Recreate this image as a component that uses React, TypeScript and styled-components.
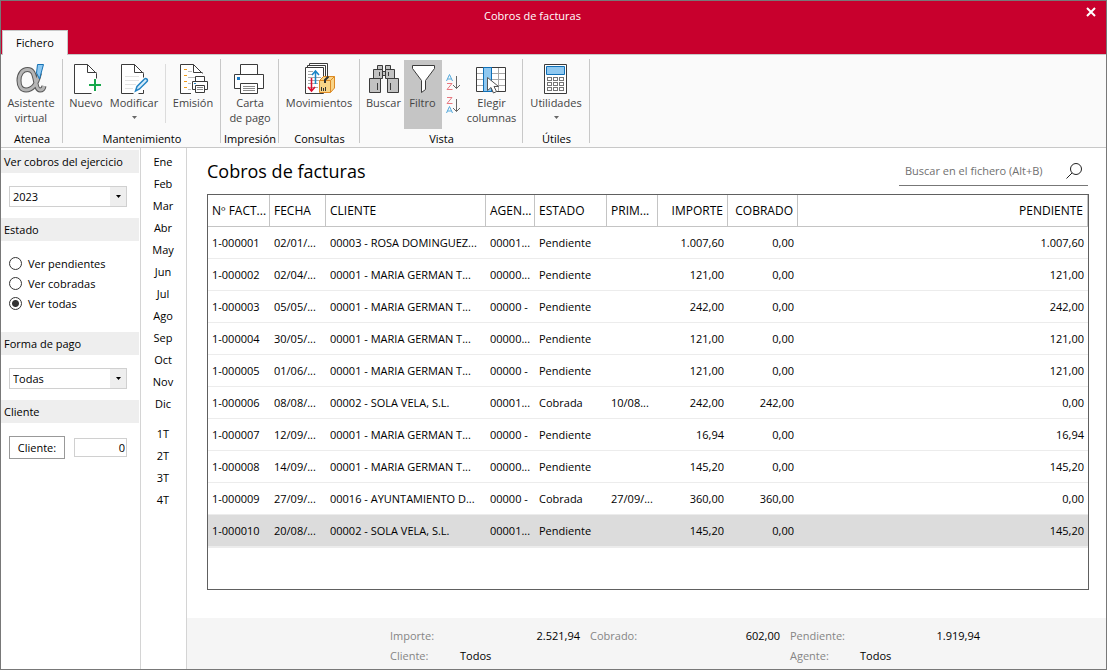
import React, { useState } from "react";
import styled, { createGlobalStyle } from "styled-components";

const GlobalStyle = createGlobalStyle`
  *, *::before, *::after { box-sizing: border-box; }
  body { margin: 0; }
  body, button, input, select {
    font-family: "Open Sans", "Segoe UI", sans-serif;
    font-size: 11px;
    line-height: 15px;
    color: #000;
  }
  button { padding: 0; border: 0; background: none; }
  h1, h2, p { margin: 0; font-weight: normal; }
`;

const Window = styled.div`
  display: flex;
  flex-direction: column;
  min-height: 100vh;
  border: 1px solid #787878;
  background: #fff;
`;

const TitleBar = styled.header`
  display: grid;
  grid-template-columns: 40px 1fr 82px;
  height: 29px;
  background: #c8002d;
  color: #fff;
`;

const WindowTitle = styled.p`
  grid-column: 2;
  align-self: center;
  text-align: center;
`;

const CloseButton = styled.button`
  justify-self: end;
  display: grid;
  place-items: center;
  width: 30px;
  height: 22px;
`;

const TabStrip = styled.nav`
  display: flex;
  padding-left: 1px;
  height: 24px;
  background: #c8002d;
`;

const Tab = styled.button`
  width: 66px;
  height: 25px;
  padding-bottom: 2px;
  border: 1px solid #c8c8c8;
  border-bottom: 0;
  background: #fafafa;
  position: relative;
`;

const Ribbon = styled.div`
  display: flex;
  height: 94px;
  border-top: 1px solid #c8c8c8;
  border-bottom: 1px solid #c8c8c8;
  background: #fafafa;
`;

const Group = styled.section<{ $width: number }>`
  display: flex;
  flex-direction: column;
  justify-content: space-between;
  width: ${(p) => p.$width}px;
  margin: 4px 0;
  border-right: 1px solid #c8c8c8;
`;

const GroupTools = styled.div<{ $start?: boolean }>`
  display: flex;
  justify-content: ${(p) => (p.$start ? "flex-start" : "center")};
  padding: 1px 0 0 1px;
`;

const GroupName = styled.h2`
  font-size: 11px;
  line-height: 9px;
  padding-left: 1px;
  text-align: center;
  white-space: nowrap;
`;

const Tool = styled.button<{ $width: number; $active?: boolean }>`
  display: flex;
  flex-direction: column;
  align-items: center;
  flex: none;
  width: ${(p) => p.$width}px;
  height: 69px;
  padding-top: 3px;
  color: #444;
  white-space: nowrap;
  background: ${(p) => (p.$active ? "#c5c5c5" : "transparent")};
  svg { flex: none; }
`;

const SortTools = styled.div`
  display: flex;
  flex-direction: column;
  gap: 6px;
  width: 22px;
  padding: 14px 0 0 3px;
`;

const SortButton = styled.button`
  width: 18px;
  height: 17px;
`;

const ToolDivider = styled.span`
  width: 1px;
  height: 59px;
  margin: 4px 5px 0;
  background: #dcdcdc;
`;

const Body = styled.div`
  display: flex;
  flex: 1;
`;

const Sidebar = styled.aside`
  width: 140px;
  padding: 2px 1px 0 0;
  border-right: 1px solid #d4d4d4;
`;

const SideTitle = styled.h2`
  height: 23px;
  padding: 4px 3px;
  background: #eee;
  font-size: 11px;
  white-space: nowrap;
`;

const SideBlock = styled.div`
  height: 45px;
  padding: 13px 0 0 8px;
`;

const SelectBox = styled.div`
  position: relative;
  width: 118px;
  svg { position: absolute; right: 6px; top: 9px; pointer-events: none; }
`;

const Select = styled.select`
  display: block;
  width: 100%;
  height: 21px;
  padding: 0 3px;
  border: 1px solid #d0d0d0;
  border-radius: 0;
  appearance: none;
  background: linear-gradient(to right, #fff calc(100% - 16px), #eee calc(100% - 16px));
`;

const Radios = styled.div`
  display: flex;
  flex-direction: column;
  height: 91px;
  padding: 12px 0 0 8px;
`;

const RadioLabel = styled.label`
  display: flex;
  align-items: center;
  gap: 6px;
  height: 20px;
`;

const Radio = styled.input`
  width: 13px;
  height: 13px;
  margin: 0;
  border: 1px solid #333;
  border-radius: 50%;
  appearance: none;
  background: ${(p) => (p.checked ? "radial-gradient(circle, #333 3px, #fff 4px)" : "#fff")};
`;

const ClientRow = styled.div`
  display: flex;
  align-items: center;
  gap: 9px;
  padding: 13px 0 0 8px;
`;

const ClientButton = styled.button`
  width: 56px;
  height: 23px;
  border: 1px solid #999;
  background: #fff;
`;

const ClientInput = styled.input`
  width: 53px;
  height: 19px;
  padding: 0 1px;
  border: 1px solid #d0d0d0;
  text-align: right;
`;

const Months = styled.nav`
  display: flex;
  flex-direction: column;
  width: 46px;
  padding: 2px 1px 0 0;
  border-right: 1px solid #d4d4d4;
`;

const MonthButton = styled.button<{ $spaced?: boolean }>`
  height: 22px;
  margin-top: ${(p) => (p.$spaced ? 8 : 0)}px;
`;

const Main = styled.main`
  display: flex;
  flex: 1;
  flex-direction: column;
  min-width: 0;
`;

const PageHead = styled.div`
  display: flex;
  justify-content: space-between;
  align-items: flex-end;
  height: 46px;
  padding: 0 18px 8px 20px;
`;

const PageTitle = styled.h1`
  font-size: 18px;
  line-height: 30px;
`;

const SearchBox = styled.div`
  display: flex;
  align-items: center;
  width: 189px;
  height: 30px;
  padding: 0 5px 0 6px;
  border-bottom: 1px solid #777;
`;

const SearchInput = styled.input`
  flex: 1;
  min-width: 0;
  padding: 0;
  border: 0;
  outline: 0;
  background: none;
  &::placeholder { color: #707070; opacity: 1; }
`;

const SearchButton = styled.button`
  display: block;
  width: 18px;
  height: 18px;
`;

const TableFrame = styled.div`
  flex: 1;
  margin: 0 17px 28px 20px;
  border: 1px solid #606060;
`;

const Table = styled.table`
  width: 100%;
  table-layout: fixed;
  border-collapse: separate;
  border-spacing: 0;
  border-bottom: 1px solid #ececec;
`;

const HeadCell = styled.th<{ $right?: boolean }>`
  height: 32px;
  padding: 0 4px;
  border-right: 1px solid #c4c4c4;
  border-bottom: 1px solid #c4c4c4;
  font-size: 12px;
  font-weight: normal;
  text-align: ${(p) => (p.$right ? "right" : "left")};
  white-space: nowrap;
`;

const Row = styled.tr<{ $selected?: boolean }>`
  background: ${(p) => (p.$selected ? "#dcdcdc" : "#fff")};
`;

const Cell = styled.td<{ $right?: boolean }>`
  height: 32px;
  padding: 0 4px;
  border-bottom: 1px solid #ececec;
  text-align: ${(p) => (p.$right ? "right" : "left")};
  white-space: nowrap;
`;

const Footer = styled.footer`
  display: grid;
  grid-template-columns: repeat(3, 190px);
  column-gap: 10px;
  grid-auto-rows: 20px;
  align-items: center;
  align-content: start;
  height: 51px;
  padding: 7px 0 0 203px;
  background: #f5f5f5;
`;

const Total = styled.p<{ $column?: number }>`
  display: flex;
  justify-content: space-between;
  grid-column: ${(p) => p.$column ?? "auto"};
`;

const Summary = styled(Total)`
  justify-content: flex-start;
`;

const TotalLabel = styled.span`
  width: 70px;
  color: #858585;
`;

const INK = "#3b3b3b";

const Svg = ({ children, w = 32, h = 32 }: { children: React.ReactNode; w?: number; h?: number }) => (
  <svg width={w} height={h} viewBox={`0 0 ${w} ${h}`} fill="none" aria-hidden="true">{children}</svg>
);

const DownArrow = () => (
  <Svg w={7} h={15}><path d="M1 6H6L3.500 9Z" fill="#666" /></Svg>
);

const ALPHA = "M24.500 10C22 21 17 27 11 27C6.500 27 4 23 4 17.500C4 11 7.500 6.500 12.500 6.500C18 6.500 19 11 20.500 18C21.500 24 22.500 27 25 27C27 27 28.500 26 29 23";

const AlphaIcon = () => (
  <Svg>
    <path d={ALPHA} stroke="#575757" strokeWidth="5" />
    <path d={ALPHA} stroke="#b5b5b5" strokeWidth="3" />
    <path d="M22.500 1.500H28.500L24.500 16L21.500 10Z" fill="#8cc8f2" stroke="#1672b4" />
  </Svg>
);

const NewIcon = () => (
  <Svg>
    <path d="M4.500 1.500H17.500L26.500 10.500V30.500H4.500Z" fill="#fff" />
    <path d="M21.500 30.500H4.500V1.500H17.500L26.500 10.500V15.500M17.500 1.500V9.500H26.500" stroke={INK} />
    <path d="M25 16V28M19 22H31" stroke="#17a84b" strokeWidth="2" />
  </Svg>
);

const EditIcon = () => (
  <Svg>
    <path d="M3.500 1.500H16.500L25.500 10.500V30.500H3.500Z" fill="#fff" />
    <path d="M15.500 30.500H3.500V1.500H16.500L25.500 10.500V14.500M16.500 1.500V9.500H25.500M25.500 27V30.500H20.500" stroke={INK} />
    <path d="M7 13.500H21M7 17.500H21M7 21.500H18M7 25.500H15" stroke="#e2e2e2" />
    <path d="M17.500 28L19 23.500L26.500 16C28 14.500 30.500 17 29 18.500L21.500 26Z" fill="#d6ecfb" stroke="#2384c4" strokeWidth="1.500" />
  </Svg>
);

const PrintPageIcon = () => (
  <Svg>
    <path d="M3.500 1.500H16.500L25.500 10.500V30.500H3.500Z" fill="#fff" />
    <path d="M14 30.500H3.500V1.500H16.500L25.500 10.500M16.500 1.500V9.500H25.500" stroke={INK} />
    <path d="M7 6.500H10M7 12.500H10M7 18.500H10M7 24.500H10" stroke="#f09a1a" />
    <path d="M11 8.500H15M11 14.500H18M11 20.500H14M11 26.500H14" stroke="#bdbdbd" />
    <path d="M18.500 18.500V13.500H27.500V18.500M15.500 18.500H30.500V26.500H15.500Z" fill="#fff" stroke={INK} />
    <path d="M18.500 22.500H27.500V29.500H18.500Z" fill="#fff" stroke={INK} />
    <path d="M20 24.500H26M20 26.500H26" stroke="#888" />
    <path d="M17 20.500H19" stroke="#2384c4" />
  </Svg>
);

const PrinterIcon = () => (
  <Svg>
    <path d="M6.500 11.500V1.500H23.500V11.500M.5 11.500H29.500V25.500H.5Z" fill="#fff" stroke={INK} />
    <path d="M6.500 20.500H23.500V30.500H6.500Z" fill="#fff" stroke={INK} />
    <path d="M9 23.500H21M9 25.500H21M9 27.500H21" stroke="#8a8a8a" />
    <path d="M3 14H6V17H3Z" fill="#1a7ac6" />
  </Svg>
);

const MovesIcon = () => (
  <Svg>
    <path d="M6.500 .5H24.500V26.500H6.500Z" fill="#fff" stroke={INK} />
    <path d="M4.500 2.500H22.500V28.500H4.500Z" fill="#fff" stroke={INK} />
    <path d="M2.500 4.500H20.500V30.500H2.500Z" fill="#fff" stroke={INK} />
    <path d="M5 8.500H10M5 11.500H10M5 14.500H18M5 17.500H18M5 20.500H15M5 24.500H15" stroke="#a9a9a9" />
    <path d="M12.500 21V8M9 12L12.500 8L16 12" stroke="#1a84c6" strokeWidth="1.500" />
    <path d="M8.500 15V28M5 24L8.500 28L12 24" stroke="#dc0d2d" strokeWidth="1.500" />
    <path d="M16.500 17.500L20.500 13.500H31.500V25L27.500 29.500H16.500Z" fill="#f9d487" stroke="#dc8a24" />
    <path d="M16.500 17.500H27.500V29.500M27.500 17.500L31.500 13.500" stroke="#dc8a24" />
    <path d="M22 20V17L25.500 13.500" stroke="#333" strokeWidth="2" />
    <path d="M18.500 24V28M20.500 25V28M22.500 24V28" stroke="#333" />
  </Svg>
);

const BinocularsIcon = () => (
  <Svg>
    <g fill="#c2c2c2" stroke={INK}>
      <path d="M9.500 2.500H14.500V6.500H9.500ZM17.500 2.500H22.500V6.500H17.500Z" />
      <path d="M14.500 8.500H17.500V12.500H14.500Z" />
      <path d="M5.500 6.500H14.500V15.500H5.500ZM17.500 6.500H26.500V15.500H17.500Z" />
      <path d="M1.500 15.500H12.500V29.500H1.500ZM19.500 15.500H30.500V29.500H19.500Z" />
      <path d="M9.500 20V27M22.500 20V27M11.500 9V13M20.500 9V13" />
    </g>
  </Svg>
);

const FilterIcon = () => (
  <Svg>
    <path d="M5.500 2.500H27.500V5.500L18.500 17.500V26.500L14.500 29.500V17.500L5.500 5.500Z" fill="#fff" stroke={INK} />
  </Svg>
);

const SortIcon = ({ descending = false }: { descending?: boolean }) => (
  <Svg w={18} h={17}>
    <g transform={descending ? "translate(0 9)" : undefined}>
      <path d="M1.500 7L4.500 .5L7.500 7M2.500 5H6.500" stroke="#55a9dc" />
    </g>
    <g transform={descending ? "translate(0 -9)" : undefined}>
      <path d="M2 9.500H7L2 15.500H7.500" stroke="#e87880" />
    </g>
    <path d="M11.500 2V14.500M8 11L11.500 14.500L15 11" stroke="#666" />
  </Svg>
);

const ColumnsIcon = () => (
  <Svg>
    <path d="M.5 4.500H29.500V28.500H.5Z" fill="#fff" />
    <path d="M1 10.500H29M1 16.500H29M1 22.500H29M22.500 5V28" stroke="#a8a8a8" />
    <path d="M.5 4.500H29.500V28.500H.5Z" stroke={INK} />
    <path d="M7.500 4.500H15.500V28.500H7.500Z" fill="#8fc8f0" stroke="#0f70b8" />
    <path d="M11.500 14.500V27.500L15 24.500L17.500 30L20.500 28.500L18 23.500H22.500Z" fill="#fff" stroke="#555" />
  </Svg>
);

const CalculatorIcon = () => (
  <Svg>
    <path d="M4.500 1.500H26.500V30.500H4.500Z" fill="#fff" stroke={INK} />
    <path d="M6.500 3.500H24.500V11.500H6.500Z" fill="#8fc8f0" stroke="#0f70b8" />
    {[14.5, 19.5, 24.5].map((y) =>
      [7.5, 13.5, 19.5].map((x) => (
        <rect key={`${x}-${y}`} x={x} y={y} width="4" height="3" stroke="#757575" />
      ))
    )}
  </Svg>
);

const months = ["Ene", "Feb", "Mar", "Abr", "May", "Jun", "Jul", "Ago", "Sep", "Oct", "Nov", "Dic"];
const quarters = ["1T", "2T", "3T", "4T"];
const states = ["Ver pendientes", "Ver cobradas", "Ver todas"];

const columns: { name: string; width?: number; right?: boolean }[] = [
  { name: "Nº FACT...", width: 62 },
  { name: "FECHA", width: 56 },
  { name: "CLIENTE", width: 160 },
  { name: "AGEN...", width: 49 },
  { name: "ESTADO", width: 72 },
  { name: "PRIM...", width: 51 },
  { name: "IMPORTE", width: 70, right: true },
  { name: "COBRADO", width: 70, right: true },
  { name: "PENDIENTE", right: true },
];

const invoices = [
  ["1-000001", "02/01/...", "00003 - ROSA DOMINGUEZ...", "00001...", "Pendiente", "", "1.007,60", "0,00", "1.007,60"],
  ["1-000002", "02/04/...", "00001 - MARIA GERMAN T...", "00000...", "Pendiente", "", "121,00", "0,00", "121,00"],
  ["1-000003", "05/05/...", "00001 - MARIA GERMAN T...", "00000 -", "Pendiente", "", "242,00", "0,00", "242,00"],
  ["1-000004", "30/05/...", "00001 - MARIA GERMAN T...", "00000...", "Pendiente", "", "121,00", "0,00", "121,00"],
  ["1-000005", "01/06/...", "00001 - MARIA GERMAN T...", "00000 -", "Pendiente", "", "121,00", "0,00", "121,00"],
  ["1-000006", "08/08/...", "00002 - SOLA VELA, S.L.", "00001...", "Cobrada", "10/08...", "242,00", "242,00", "0,00"],
  ["1-000007", "12/09/...", "00001 - MARIA GERMAN T...", "00000 -", "Pendiente", "", "16,94", "0,00", "16,94"],
  ["1-000008", "14/09/...", "00001 - MARIA GERMAN T...", "00000...", "Pendiente", "", "145,20", "0,00", "145,20"],
  ["1-000009", "27/09/...", "00016 - AYUNTAMIENTO D...", "00000 -", "Cobrada", "27/09/...", "360,00", "360,00", "0,00"],
  ["1-000010", "20/08/...", "00002 - SOLA VELA, S.L.", "00001...", "Pendiente", "", "145,20", "0,00", "145,20"],
];

const Dropdown = ({ label, value }: { label: string; value: string }) => (
  <SelectBox>
    <Select aria-label={label} defaultValue={value}>
      <option>{value}</option>
    </Select>
    <Svg w={5} h={3}><path d="M0 0H5L2.500 3Z" fill="#000" /></Svg>
  </SelectBox>
);

export default function App() {
  const [state, setState] = useState("Ver todas");
  const [selected, setSelected] = useState("1-000010");

  return (
    <Window>
      <GlobalStyle />
      <TitleBar>
        <WindowTitle>Cobros de facturas</WindowTitle>
        <CloseButton aria-label="Cerrar">
          <Svg w={10} h={10}><path d="M1 1L9 9M9 1L1 9" stroke="#fff" strokeWidth="2" /></Svg>
        </CloseButton>
      </TitleBar>
      <TabStrip>
        <Tab>Fichero</Tab>
      </TabStrip>
      <Ribbon>
        <Group $width={62}>
          <GroupTools $start>
            <Tool $width={58}><AlphaIcon /><span>Asistente</span><span>virtual</span></Tool>
          </GroupTools>
          <GroupName>Atenea</GroupName>
        </Group>
        <Group $width={158}>
          <GroupTools $start>
            <Tool $width={44}><NewIcon /><span>Nuevo</span></Tool>
            <Tool $width={52}><EditIcon /><span>Modificar</span><DownArrow /></Tool>
            <ToolDivider />
            <Tool $width={44}><PrintPageIcon /><span>Emisión</span></Tool>
          </GroupTools>
          <GroupName>Mantenimiento</GroupName>
        </Group>
        <Group $width={58}>
          <GroupTools>
            <Tool $width={50}><PrinterIcon /><span>Carta</span><span>de pago</span></Tool>
          </GroupTools>
          <GroupName>Impresión</GroupName>
        </Group>
        <Group $width={81}>
          <GroupTools $start>
            <Tool $width={78}><MovesIcon /><span>Movimientos</span></Tool>
          </GroupTools>
          <GroupName>Consultas</GroupName>
        </Group>
        <Group $width={163}>
          <GroupTools>
            <Tool $width={40}><BinocularsIcon /><span>Buscar</span></Tool>
            <Tool $width={38} $active><FilterIcon /><span>Filtro</span></Tool>
            <SortTools>
              <SortButton aria-label="Orden ascendente"><SortIcon /></SortButton>
              <SortButton aria-label="Orden descendente"><SortIcon descending /></SortButton>
            </SortTools>
            <Tool $width={56}><ColumnsIcon /><span>Elegir</span><span>columnas</span></Tool>
          </GroupTools>
          <GroupName>Vista</GroupName>
        </Group>
        <Group $width={67}>
          <GroupTools $start>
            <Tool $width={64}><CalculatorIcon /><span>Utilidades</span><DownArrow /></Tool>
          </GroupTools>
          <GroupName>Útiles</GroupName>
        </Group>
      </Ribbon>
      <Body>
        <Sidebar>
          <SideTitle>Ver cobros del ejercicio</SideTitle>
          <SideBlock><Dropdown label="Ver cobros del ejercicio" value="2023" /></SideBlock>
          <SideTitle>Estado</SideTitle>
          <Radios role="radiogroup" aria-label="Estado">
            {states.map((name) => (
              <RadioLabel key={name}>
                <Radio type="radio" name="estado" checked={state === name} onChange={() => setState(name)} />
                {name}
              </RadioLabel>
            ))}
          </Radios>
          <SideTitle>Forma de pago</SideTitle>
          <SideBlock><Dropdown label="Forma de pago" value="Todas" /></SideBlock>
          <SideTitle>Cliente</SideTitle>
          <ClientRow>
            <ClientButton>Cliente:</ClientButton>
            <ClientInput aria-label="Cliente" defaultValue="0" />
          </ClientRow>
        </Sidebar>
        <Months aria-label="Periodo">
          {months.map((m) => <MonthButton key={m}>{m}</MonthButton>)}
          {quarters.map((q, i) => <MonthButton key={q} $spaced={i === 0}>{q}</MonthButton>)}
        </Months>
        <Main>
          <PageHead>
            <PageTitle>Cobros de facturas</PageTitle>
            <SearchBox>
              <SearchInput aria-label="Buscar en el fichero" placeholder="Buscar en el fichero (Alt+B)" />
              <SearchButton aria-label="Buscar">
                <Svg w={18} h={18}>
                  <circle cx="11" cy="7" r="5.500" stroke="#222" />
                  <path d="M7 11L1.500 16.500" stroke="#222" />
                </Svg>
              </SearchButton>
            </SearchBox>
          </PageHead>
          <TableFrame>
            <Table>
              <colgroup>
                {columns.map((c) => <col key={c.name} width={c.width} />)}
              </colgroup>
              <thead>
                <tr>
                  {columns.map((c) => <HeadCell key={c.name} scope="col" $right={c.right}>{c.name}</HeadCell>)}
                </tr>
              </thead>
              <tbody>
                {invoices.map((row) => (
                  <Row key={row[0]} $selected={row[0] === selected} onClick={() => setSelected(row[0])}>
                    {row.map((text, i) => <Cell key={columns[i].name} $right={columns[i].right}>{text}</Cell>)}
                  </Row>
                ))}
              </tbody>
            </Table>
          </TableFrame>
          <Footer>
            <Total><TotalLabel>Importe:</TotalLabel>2.521,94</Total>
            <Total><TotalLabel>Cobrado:</TotalLabel>602,00</Total>
            <Total><TotalLabel>Pendiente:</TotalLabel>1.919,94</Total>
            <Summary><TotalLabel>Cliente:</TotalLabel>Todos</Summary>
            <Summary $column={3}><TotalLabel>Agente:</TotalLabel>Todos</Summary>
          </Footer>
        </Main>
      </Body>
    </Window>
  );
}
